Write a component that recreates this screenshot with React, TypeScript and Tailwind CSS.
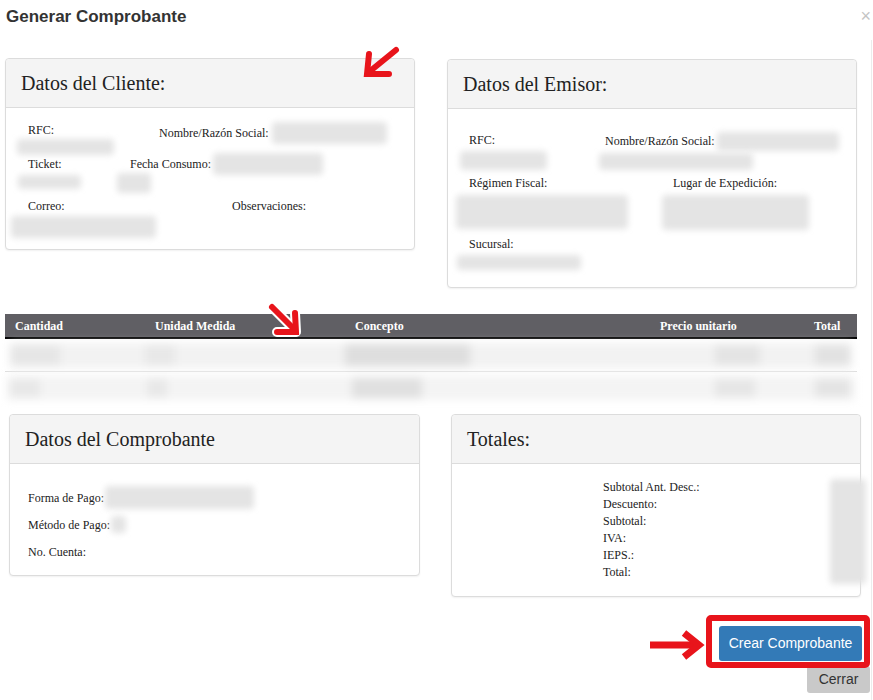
import React from 'react';

const serif = "font-['Liberation_Serif','Times_New_Roman',serif]";
const sans = "font-['Liberation_Sans',Arial,sans-serif]";

// blurred placeholder for hidden values
function Blur({ className = '' }: { className?: string }) {
  return <div className={`bg-[#e4e4e4] blur-[3px] rounded-sm ${className}`} />;
}

function Card({
  title,
  className = '',
  children,
}: {
  title: string;
  className?: string;
  children: React.ReactNode;
}) {
  return (
    <div
      className={`flex flex-col rounded-[4px] border border-[#dcdcdc] bg-white shadow-[0_1px_2px_rgba(0,0,0,0.06)] ${className}`}
    >
      {/* card header */}
      <div className="flex h-[49px] shrink-0 items-center rounded-t-[4px] border-b border-[#dcdcdc] bg-[#f4f4f4] pl-[15px]">
        <h2 className={`${serif} text-[20px] text-[#222]`}>{title}</h2>
      </div>
      {children}
    </div>
  );
}

function Arrows() {
  return (
    <svg
      className="pointer-events-none absolute left-0 top-0"
      width="873"
      height="700"
      viewBox="0 0 873 700"
    >
      {/* arrow over Datos del Cliente */}
      <g stroke="#e8141b" strokeWidth="6" fill="none" strokeLinecap="round" strokeLinejoin="miter">
        <line x1="396" y1="50" x2="369" y2="72" />
        <polyline points="369,54 367,74 389,74" />
      </g>
      {/* arrow on table header, with white outline */}
      <g fill="none" strokeLinecap="round" strokeLinejoin="round">
        <g stroke="#ffffff" strokeWidth="10">
          <line x1="272" y1="307" x2="295" y2="330" />
          <polyline points="295,313 296,332 277,332" />
        </g>
        <g stroke="#e8141b" strokeWidth="6">
          <line x1="272" y1="307" x2="295" y2="330" />
          <polyline points="295,313 296,332 277,332" strokeLinejoin="miter" />
        </g>
      </g>
      {/* arrow pointing at the button */}
      <g stroke="#e8141b" fill="none">
        <line x1="650" y1="645" x2="696" y2="645" strokeWidth="7" />
        <polyline points="684,633 699,645 684,657" strokeWidth="7" strokeLinejoin="miter" />
      </g>
    </svg>
  );
}

export default function App() {
  return (
    <div className={`relative h-[700px] w-[873px] overflow-hidden bg-white text-[12px] text-[#222] ${serif}`}>
      {/* faint scroll edge */}
      <div className="absolute right-[1px] top-[40px] h-[660px] w-px bg-[#ececec]" />

      {/* modal header */}
      <div className="flex h-[34px] items-center justify-between pl-[6px] pr-[2px]">
        <h1 className={`${sans} text-[17px] font-bold text-[#333]`}>Generar Comprobante</h1>
        <span className={`${sans} -mt-[2px] text-[18px] leading-none text-[#c4c4c4]`}>×</span>
      </div>

      {/* top cards */}
      <div className="mt-[24px] flex items-start gap-[32px] pl-[5px]">
        <Card title="Datos del Cliente:" className="h-[192px] w-[410px]">
          <div className="flex flex-col pt-[14px] leading-[17px]">
            {/* rfc / nombre */}
            <div className="flex items-start">
              <div className="flex w-[153px] flex-col">
                <span className="pl-[22px]">RFC:</span>
                <Blur className="ml-[11px] h-[16px] w-[97px]" />
              </div>
              <div className="flex items-center">
                <span>Nombre/Razón Social:</span>
                <Blur className="ml-[3px] h-[22px] w-[115px]" />
              </div>
            </div>
            {/* ticket / fecha */}
            <div className="mt-[1px] flex items-start">
              <div className="flex w-[124px] flex-col">
                <span className="pl-[22px]">Ticket:</span>
                <Blur className="ml-[12px] mt-[2px] h-[14px] w-[63px]" />
              </div>
              <div className="-mt-[3px] flex flex-col">
                <div className="flex items-center">
                  <span>Fecha Consumo:</span>
                  <Blur className="ml-[2px] h-[22px] w-[110px]" />
                </div>
                <Blur className="-ml-[13px] -mt-[2px] h-[20px] w-[34px]" />
              </div>
            </div>
            {/* correo / observaciones */}
            <div className="mt-[5px] flex items-start">
              <div className="flex w-[226px] flex-col">
                <span className="pl-[22px]">Correo:</span>
                <Blur className="ml-[5px] mt-[1px] h-[22px] w-[145px]" />
              </div>
              <span>Observaciones:</span>
            </div>
          </div>
        </Card>

        <Card title="Datos del Emisor:" className="mt-[1px] h-[229px] w-[410px]">
          <div className="flex flex-col pt-[23px] leading-[17px]">
            <div className="flex items-start">
              <div className="flex w-[157px] flex-col">
                <span className="pl-[21px]">RFC:</span>
                <Blur className="ml-[12px] mt-[2px] h-[19px] w-[87px]" />
              </div>
              <div className="flex flex-col">
                <div className="flex items-center">
                  <span>Nombre/Razón Social:</span>
                  <Blur className="ml-[2px] h-[19px] w-[122px]" />
                </div>
                <Blur className="-ml-[6px] mt-[2px] h-[17px] w-[154px]" />
              </div>
            </div>
            <div className="mt-[5px] flex items-start">
              <div className="flex w-[225px] flex-col">
                <span className="pl-[21px]">Régimen Fiscal:</span>
                <Blur className="ml-[8px] mt-[3px] h-[34px] w-[172px]" />
              </div>
              <div className="flex flex-col">
                <span>Lugar de Expedición:</span>
                <Blur className="-ml-[11px] mt-[3px] h-[35px] w-[147px]" />
              </div>
            </div>
            <div className="mt-[6px] flex flex-col">
              <span className="pl-[21px]">Sucursal:</span>
              <Blur className="ml-[9px] mt-[2px] h-[15px] w-[124px]" />
            </div>
          </div>
        </Card>
      </div>

      {/* concepts table */}
      <div className="ml-[5px] mt-[26px] w-[852px]">
        <div className="flex h-[25px] items-center border-b-2 border-black bg-[#605f64] text-[12px] font-bold text-white">
          <span className="w-[150px] pl-[10px]">Cantidad</span>
          <span className="w-[200px]">Unidad Medida</span>
          <span className="w-[305px]">Concepto</span>
          <span className="w-[154px]">Precio unitario</span>
          <span>Total</span>
        </div>
        {/* blurred row 1 */}
        <div className="flex h-[33px] items-center border-b border-[#dedede] px-[5px]">
          <div className="flex h-[25px] w-full items-center bg-[#f2f2f2] blur-[4px]">
            <div className="h-[20px] w-[50px] bg-[#e6e6e6]" />
            <div className="ml-[85px] h-[20px] w-[30px] bg-[#e8e8e8]" />
            <div className="ml-[170px] h-[22px] w-[125px] bg-[#dedede]" />
            <div className="ml-[245px] h-[20px] w-[45px] bg-[#e4e4e4]" />
            <div className="ml-[55px] h-[20px] w-[35px] bg-[#e2e2e2]" />
          </div>
        </div>
        {/* blurred row 2 */}
        <div className="flex h-[31px] items-center px-[2px]">
          <div className="flex h-[24px] w-full items-center bg-[#f4f4f4] blur-[4px]">
            <div className="ml-[3px] h-[18px] w-[30px] bg-[#e8e8e8]" />
            <div className="ml-[107px] h-[18px] w-[20px] bg-[#e8e8e8]" />
            <div className="ml-[185px] h-[20px] w-[70px] bg-[#e0e0e0]" />
            <div className="ml-[293px] h-[18px] w-[40px] bg-[#e6e6e6]" />
            <div className="ml-[60px] h-[18px] w-[35px] bg-[#e4e4e4]" />
          </div>
        </div>
      </div>

      {/* bottom cards */}
      <div className="mt-[11px] flex items-start pl-[9px]">
        <Card title="Datos del Comprobante" className="h-[162px] w-[411px]">
          <div className="flex flex-col pl-[18px] pt-[20px]">
            <div className="flex h-[27px] items-center">
              <span>Forma de Pago:</span>
              <Blur className="ml-[1px] h-[23px] w-[149px]" />
            </div>
            <div className="flex h-[27px] items-center">
              <span>Método de Pago:</span>
              <Blur className="ml-[1px] h-[17px] w-[15px]" />
            </div>
            <div className="flex h-[27px] items-center">
              <span>No. Cuenta:</span>
            </div>
          </div>
        </Card>

        <Card title="Totales:" className="ml-[31px] h-[183px] w-[410px]">
          <div className="flex items-start justify-between pl-[151px] pt-[15px]">
            <div className="flex flex-col leading-[17px]">
              <span>Subtotal Ant. Desc.:</span>
              <span>Descuento:</span>
              <span>Subtotal:</span>
              <span>IVA:</span>
              <span>IEPS.:</span>
              <span>Total:</span>
            </div>
            <Blur className="-mr-[6px] h-[105px] w-[36px] bg-[#e0e0e0]" />
          </div>
        </Card>
      </div>

      {/* footer buttons */}
      <div className={`mt-[29px] flex flex-col items-end ${sans}`}>
        <button className="mr-[11px] h-[35px] w-[143px] rounded-[3px] bg-[#337ab7] text-[14px] text-white">
          Crear Comprobante
        </button>
        <button className="mr-[3px] mt-[5px] h-[27px] w-[63px] rounded-[3px] bg-[#c9c9c9] text-[14px] text-[#333]">
          Cerrar
        </button>
      </div>

      {/* red highlight box */}
      <div className="pointer-events-none absolute left-[706px] top-[615px] h-[53px] w-[164px] rounded-[5px] border-[6px] border-[#e8141b]" />

      <Arrows />
    </div>
  );
}
